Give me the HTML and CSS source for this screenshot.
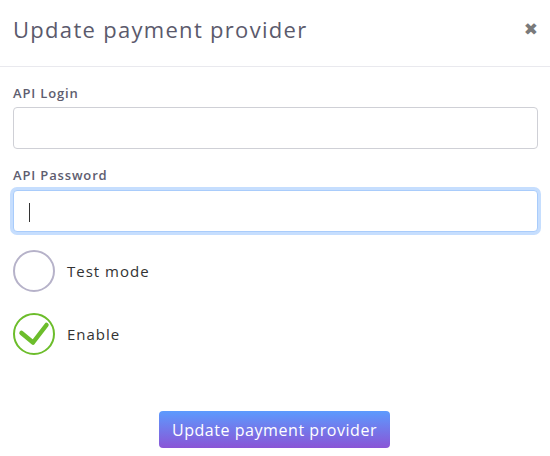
FILE: index.html
```html
<!DOCTYPE html>
<html>
<head>
<meta charset="utf-8">
<link rel="stylesheet" href="styles.css">
</head>
<body>
<div class="modal">
  <div class="modal-header">
    <h1 class="modal-title">Update payment provider</h1>
    <span class="close">&#10006;</span>
  </div>
  <div class="modal-body">
    <div class="field">
      <label class="label">API Login</label>
      <div class="input"></div>
    </div>
    <div class="field last">
      <label class="label">API Password</label>
      <div class="input focused"><span class="caret"></span></div>
    </div>
    <div class="check-row">
      <svg class="check" width="44" height="44" viewBox="0 0 44 44"><circle cx="22" cy="22" r="20" fill="none" stroke="#b6b2c9" stroke-width="2"/></svg>
      <span class="check-label">Test mode</span>
    </div>
    <div class="check-row">
      <svg class="check" width="44" height="44" viewBox="0 0 44 44"><circle cx="22" cy="22" r="20" fill="none" stroke="#6cbd2b" stroke-width="2"/><path d="M9.5 21 L21 30.5 L34.5 13" fill="none" stroke="#6cbd2b" stroke-width="4.5" stroke-linecap="round" stroke-linejoin="round"/></svg>
      <span class="check-label">Enable</span>
    </div>
  </div>
  <div class="modal-footer">
    <button class="btn">Update payment provider</button>
  </div>
</div>
</body>
</html>
```
FILE: styles.css
```css
* { box-sizing: border-box; }
html, body { margin: 0; padding: 0; background: #fff; }
body { font-family: "Open Sans", "Liberation Sans", sans-serif; color: #333; }
.modal { width: 550px; height: 456px; background: #fff; }
.modal-header {
  height: 67px;
  border-bottom: 1px solid #e9e9ee;
  display: flex;
  align-items: center;
  justify-content: space-between;
  padding: 0 12px 0 13px;
}
.modal-title {
  margin: 0;
  font-size: 22px;
  font-weight: 400;
  color: #5b5a6c;
  letter-spacing: 1.3px;
  padding-bottom: 8px;
}
.close { color: #7a7a7a; font-size: 17px; font-weight: 700; padding-bottom: 8px; font-family: "DejaVu Sans", sans-serif; }
.modal-body { padding: 16px 12px 0 13px; }
.field { margin-bottom: 16px; }
.field.last { margin-bottom: 17px; }
.label {
  display: block;
  font-size: 13px;
  font-weight: 600;
  color: #5e5d6f;
  letter-spacing: 0.85px;
  line-height: 20px;
  margin-bottom: 4px;
}
.input {
  height: 42px;
  border: 1px solid #cfd0d6;
  border-radius: 4px;
  background: #fff;
  position: relative;
}
.input.focused {
  border-color: #a9ccfb;
  box-shadow: 0 0 0 3px #c6defe;
  margin-top: 5px;
}
.caret {
  position: absolute;
  left: 15px;
  top: 12px;
  width: 1px;
  height: 19px;
  background: #333;
}
.check-row {
  display: flex;
  align-items: center;
  gap: 11px;
  margin-left: -1px;
  margin-bottom: 19px;
}
.check { display: block; }
.check-label { font-size: 15px; color: #333; letter-spacing: 1px; }
.modal-footer { display: flex; justify-content: center; padding-top: 36px; padding-right: 1px; }
.btn {
  width: 231px;
  height: 37px;
  border: none;
  border-radius: 4px;
  background: linear-gradient(#5c9bfe, #8a55d6);
  color: #fff;
  font-family: inherit;
  font-size: 16px;
  font-weight: 500;
  letter-spacing: 0.55px;
}
```
